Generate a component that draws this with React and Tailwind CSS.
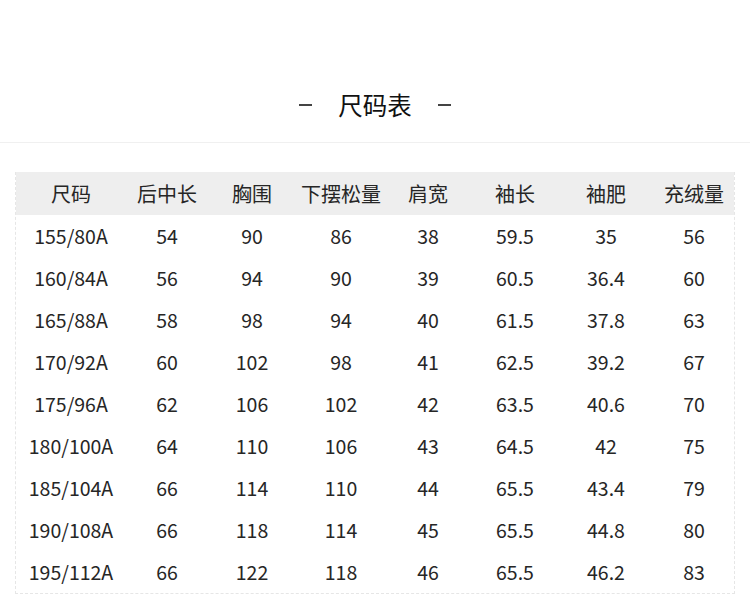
const headers = ["尺码", "后中长", "胸围", "下摆松量", "肩宽", "袖长", "袖肥", "充绒量"];

const rows = [
  ["155/80A", "54", "90", "86", "38", "59.5", "35", "56"],
  ["160/84A", "56", "94", "90", "39", "60.5", "36.4", "60"],
  ["165/88A", "58", "98", "94", "40", "61.5", "37.8", "63"],
  ["170/92A", "60", "102", "98", "41", "62.5", "39.2", "67"],
  ["175/96A", "62", "106", "102", "42", "63.5", "40.6", "70"],
  ["180/100A", "64", "110", "106", "43", "64.5", "42", "75"],
  ["185/104A", "66", "114", "110", "44", "65.5", "43.4", "79"],
  ["190/108A", "66", "118", "114", "45", "65.5", "44.8", "80"],
  ["195/112A", "66", "122", "118", "46", "65.5", "46.2", "83"],
];

const cols = "grid grid-cols-[110px_82px_88px_90px_84px_90px_92px_84px]";

function App() {
  return (
    <div className="w-[750px] h-[594px] overflow-hidden bg-white text-[#262626] font-['Noto_Sans_CJK_SC','Noto_Sans',sans-serif]">
      <header className="h-[143px] border-b border-[#f0f0f0] flex items-end justify-center pb-[19px]">
        <div className="flex items-center gap-[26px]">
          <span className="w-[13px] h-[2px] bg-[#444]" />
          <h1 className="text-[24.5px] leading-[36px] text-[#111]">尺码表</h1>
          <span className="w-[13px] h-[2px] bg-[#444]" />
        </div>
      </header>

      <section className="mt-[29px] mx-[15px] border-x border-b border-dashed border-[#e6e6e6]">
        <div className={`${cols} h-[43px] bg-[#eeeeee] items-center text-[20px]`}>
          {headers.map((h) => (
            <div key={h} className="text-center">
              {h}
            </div>
          ))}
        </div>

        {rows.map((row) => (
          <div key={row[0]} className={`${cols} h-[42px] items-center text-[19.5px]`}>
            {row.map((cell, i) => (
              <div key={i} className="text-center">
                {cell}
              </div>
            ))}
          </div>
        ))}
      </section>
    </div>
  );
}

export default App;
